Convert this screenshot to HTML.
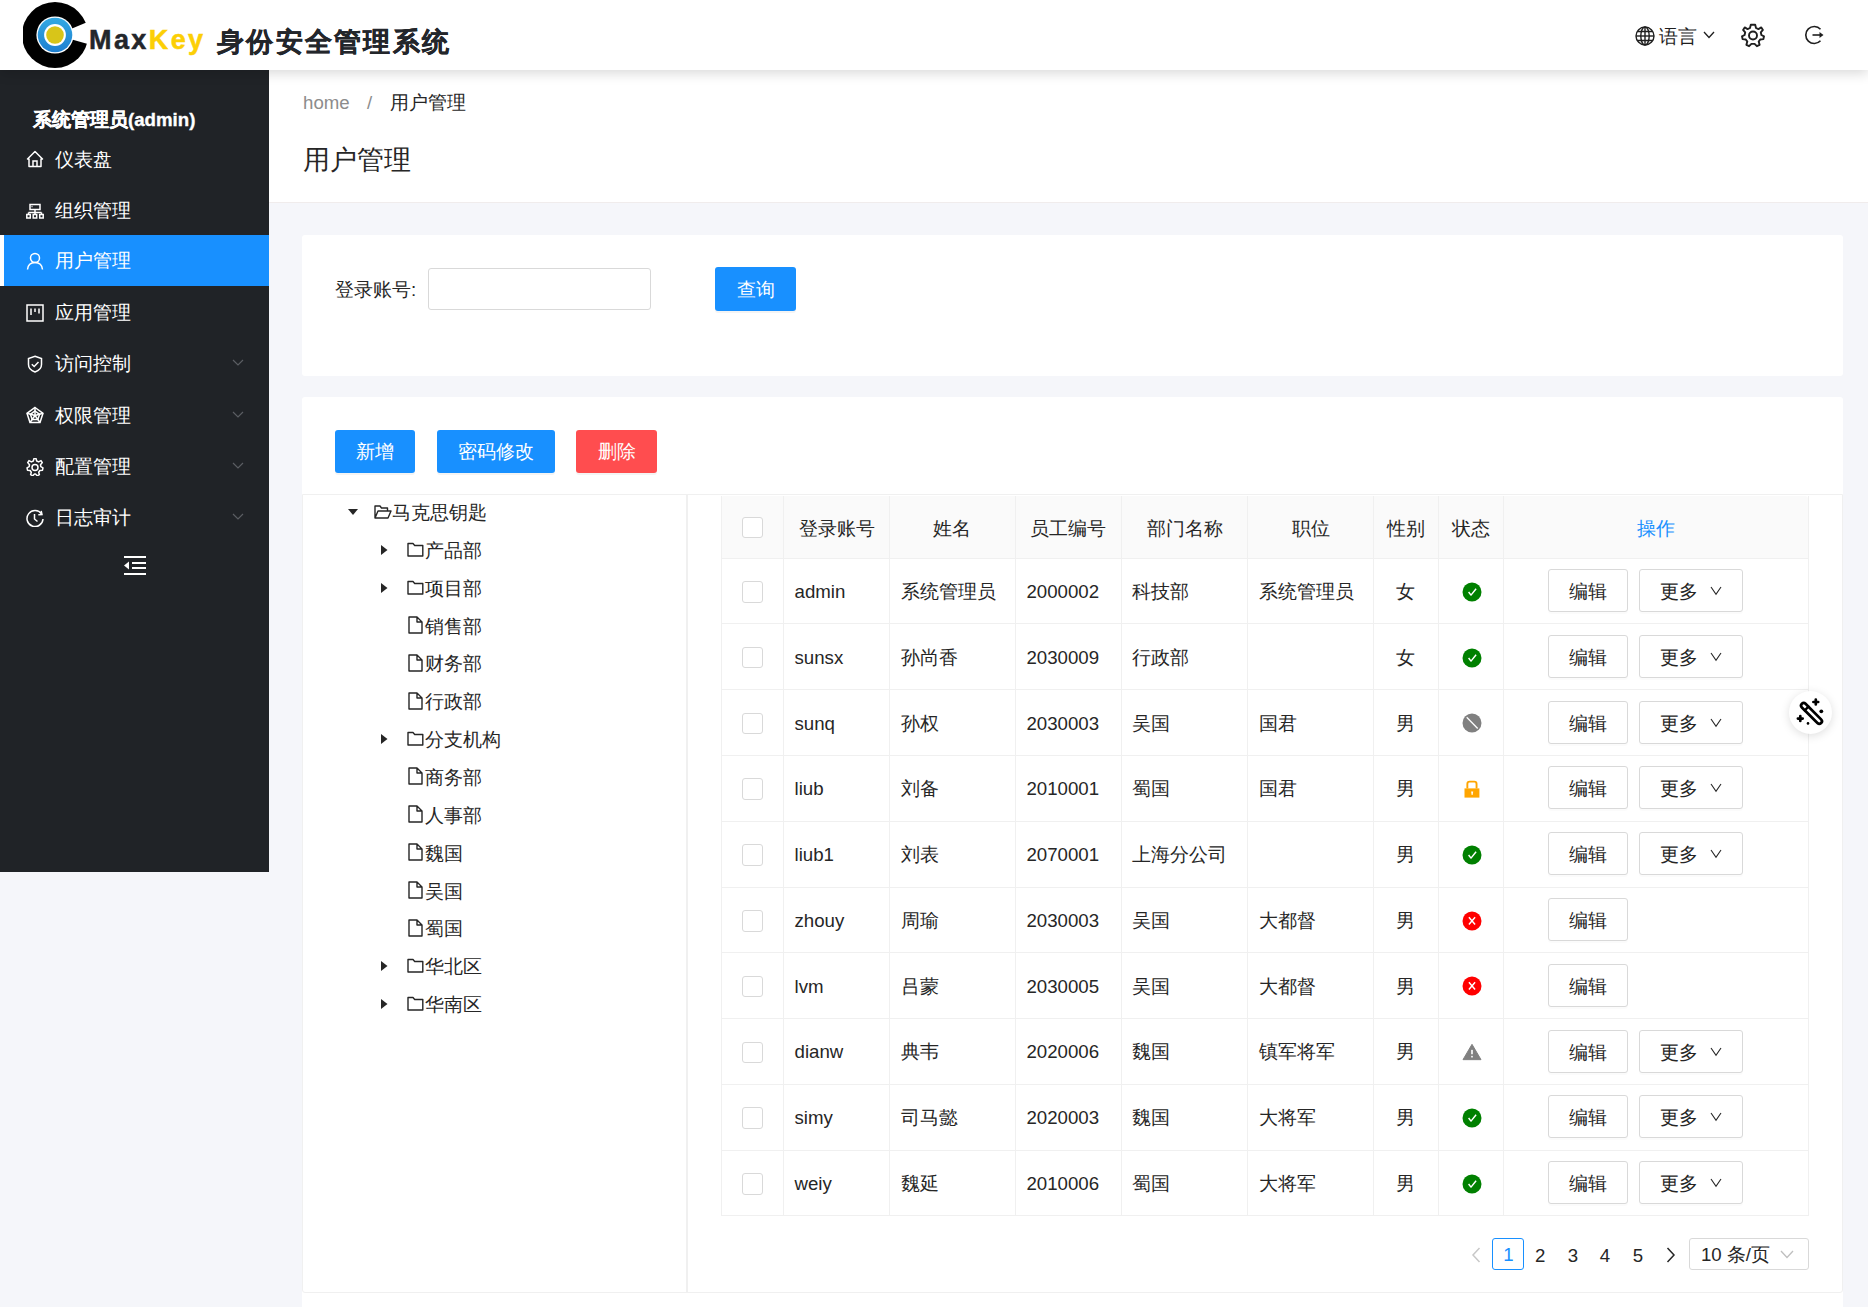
<!DOCTYPE html><html><head><meta charset="utf-8"><title>MaxKey</title><style>
*{box-sizing:border-box;margin:0;padding:0}
html,body{width:1868px;height:1307px;overflow:hidden}
body{position:relative;background:#f5f6fa;font-family:"Liberation Sans",sans-serif;font-size:18.67px;color:#262626}
.abs{position:absolute}
.hdr{left:0;top:0;width:1868px;height:70px;background:#fff;box-shadow:0 3px 12px rgba(0,0,0,.16);z-index:5}
.side{left:0;top:70px;width:269px;height:802px;background:#202327;z-index:4}
.mi{position:absolute;left:0;width:269px;height:51px;color:#fff;font-size:18.67px}
.mi .t{position:absolute;left:55px;top:0;line-height:51px;white-space:nowrap}
.mi svg{position:absolute;left:26px}
.mi .chev{position:absolute;left:232px;top:20px}
.phead{left:269px;top:70px;width:1599px;height:133px;background:#fff;border-bottom:1px solid #f0ecec;z-index:1}
.card{background:#fff;border-radius:3px}
.btn{position:absolute;height:43px;border-radius:3px;color:#fff;text-align:center;line-height:43px;font-size:18.67px;box-shadow:0 2px 0 rgba(0,0,0,.045)}
.blue{background:#1890ff}
.red{background:#ff4d4f}
.tr{position:absolute;height:38px;line-height:38px;white-space:nowrap;font-size:18.67px;color:#262626}
.cell{position:absolute;white-space:nowrap;font-size:18.67px;color:#262626}
.hl{position:absolute;background:#f0f0f0}
.cb{position:absolute;width:21.5px;height:21.5px;border:1px solid #d9d9d9;border-radius:3px;background:#fff}
.obtn{position:absolute;height:43px;border:1px solid #d9d9d9;border-radius:3px;background:#fff;line-height:44px;text-align:center;box-shadow:0 2px 0 rgba(0,0,0,.016)}
</style></head><body>
<div class="abs hdr"><svg width="64" height="66" viewBox="0 0 64 66" style="position:absolute;left:23px;top:2px;">
<defs><linearGradient id="bg1" x1="0" y1="0" x2="0" y2="1"><stop offset="0" stop-color="#33a9e3"/><stop offset="1" stop-color="#1e7fd0"/></linearGradient></defs>
<circle cx="32" cy="33" r="33" fill="#000"/>
<polygon points="40,30.2 70,17.9 70,43.45 40,35.1" fill="#fff"/>
<circle cx="32" cy="33" r="18.6" fill="#fff"/>
<circle cx="32" cy="33" r="17.3" fill="url(#bg1)"/>
<circle cx="32" cy="33" r="10.9" fill="#fff"/>
<circle cx="32" cy="33" r="8.8" fill="#d8c519"/>
</svg><div class="abs" style="left:89px;top:20px;font-size:27px;font-weight:bold;letter-spacing:2.4px;-webkit-text-stroke:0.5px #23262b;line-height:40px;color:#23262b;white-space:nowrap">Max<span style="color:#fccf05;-webkit-text-stroke:0.5px #fccf05">Key</span></div><div class="abs" style="left:217px;top:22px;font-size:27px;font-weight:bold;letter-spacing:2.3px;-webkit-text-stroke:0.3px #23262b;line-height:40px;color:#23262b;white-space:nowrap">身份安全管理系统</div><svg width="20" height="20" viewBox="0 0 20 20" style="position:absolute;left:1635px;top:25.5px;"><g fill="none" stroke="#1f1f1f" stroke-width="1.4"><circle cx="10" cy="10" r="9"/><ellipse cx="10" cy="10" rx="4.2" ry="9"/><line x1="10" y1="1" x2="10" y2="19"/><line x1="1" y1="10" x2="19" y2="10"/><path d="M2.5 5.5 H17.5 M2.5 14.5 H17.5"/></g></svg><div class="abs" style="left:1659px;top:17.5px;line-height:38px;font-size:18.67px;color:#1f1f1f">语言</div><svg width="12" height="8" viewBox="0 0 12 8" style="position:absolute;left:1702.5px;top:31px;"><path d="M1 1 L6 6.5 L11 1" fill="none" stroke="#1f1f1f" stroke-width="1.3"/></svg><svg width="24" height="25" viewBox="0 0 24 25" style="position:absolute;left:1740.5px;top:22.5px;"><g fill="none" stroke="#1f1f1f" stroke-width="1.9"><path d="M12 1.8 L14.2 1.8 L15 5 L17.4 6.1 L20.3 4.4 L21.9 6.9 L19.8 9.4 L20.4 12 L23 13.3 L22.4 16.1 L19.2 16.5 L17.7 18.6 L18.6 21.8 L15.9 23.2 L13.6 20.9 L10.4 20.9 L8.1 23.2 L5.4 21.8 L6.3 18.6 L4.8 16.5 L1.6 16.1 L1 13.3 L3.6 12 L4.2 9.4 L2.1 6.9 L3.7 4.4 L6.6 6.1 L9 5 L9.8 1.8 Z" stroke-linejoin="round"/><circle cx="12" cy="12.5" r="4"/></g></svg><svg width="20" height="20" viewBox="0 0 20 20" style="position:absolute;left:1803.5px;top:25px;"><g fill="none" stroke="#1f1f1f" stroke-width="1.6"><path d="M16.5 4.2 A8.5 8.5 0 1 0 16.5 15.8"/><path d="M8.5 10 H18"/></g><path d="M15.5 7 L19.5 10 L15.5 13 Z" fill="#1f1f1f"/></svg></div>
<div class="abs side"><div class="abs" style="left:33px;top:34.5px;font-size:18.67px;font-weight:bold;color:#fff;line-height:30px;white-space:nowrap;-webkit-text-stroke:0.35px #fff">系统管理员(admin)</div><div class="mi" style="top:63.5px;"><svg width="18" height="18" viewBox="0 0 18 18" style="position:absolute;left:26px;top:16.5px;"><path d="M1.5 9 L9 1.5 L16.5 9 L15 9 L15 16.5 L3 16.5 L3 9 Z" fill="none" stroke="#fff" stroke-width="1.5" stroke-linejoin="round"/><path d="M7 16.5 V11 H11 V16.5" fill="none" stroke="#fff" stroke-width="1.5"/></svg><span class="t">仪表盘</span></div><div class="mi" style="top:114.5px;"><svg width="18" height="18" viewBox="0 0 18 18" style="position:absolute;left:26px;top:18px;"><rect x="4" y="1.5" width="10" height="5" fill="none" stroke="#fff" stroke-width="1.5"/><path d="M9 6.5 V9.5 M2.5 9.5 H15.5 M2.5 9.5 V11 M9 9.5 V11 M15.5 9.5 V11" fill="none" stroke="#fff" stroke-width="1.5"/><rect x="0.8" y="11.5" width="3.5" height="3.5" fill="none" stroke="#fff" stroke-width="1.5"/><rect x="7.2" y="11.5" width="3.5" height="3.5" fill="none" stroke="#fff" stroke-width="1.5"/><rect x="13.7" y="11.5" width="3.5" height="3.5" fill="none" stroke="#fff" stroke-width="1.5"/><path d="M5.5 3.5 H6.5" fill="none" stroke="#fff" stroke-width="1.5"/></svg><span class="t">组织管理</span></div><div class="mi" style="top:165px;background:#1890ff;border-left:0;"><svg width="18" height="18" viewBox="0 0 18 18" style="position:absolute;left:26px;top:16.5px;"><circle cx="9" cy="6" r="4.5" fill="none" stroke="#fff" stroke-width="1.5" stroke-width="1.7"/><path d="M1.5 17.5 C2 12.5 5.5 10.5 9 10.5 C12.5 10.5 16 12.5 16.5 17.5" fill="none" stroke="#fff" stroke-width="1.5" stroke-width="1.7"/></svg><span class="t">用户管理</span><div class="abs" style="left:0;top:0;width:4px;height:51px;background:#fff"></div></div><div class="mi" style="top:217px;"><svg width="18" height="18" viewBox="0 0 18 18" style="position:absolute;left:26px;top:16.5px;"><rect x="1" y="1" width="16" height="16" fill="none" stroke="#fff" stroke-width="1.5" stroke-width="1.7"/><path d="M5 4.5 V11 M9 4.5 V8 M13 4.5 V9.5" fill="none" stroke="#fff" stroke-width="1.5" stroke-width="1.7"/></svg><span class="t">应用管理</span></div><div class="mi" style="top:268px;"><svg width="18" height="18" viewBox="0 0 18 18" style="position:absolute;left:26px;top:16.5px;"><path d="M9 1.3 L15.5 3.6 V9.5 C15.5 13.5 12 16 9 17 C6 16 2.5 13.5 2.5 9.5 V3.6 Z" fill="none" stroke="#fff" stroke-width="1.5" stroke-width="1.5"/><path d="M5.8 9.2 L8.2 11.5 L12.5 7" fill="none" stroke="#fff" stroke-width="1.5" stroke-width="1.5"/></svg><span class="t">访问控制</span><svg width="12" height="8" viewBox="0 0 12 8" style="position:absolute;left:232px;top:21px;"><path d="M1 1 L6 6 L11 1" fill="none" stroke="#5b5e63" stroke-width="1.2"/></svg></div><div class="mi" style="top:319.5px;"><svg width="18" height="18" viewBox="0 0 18 18" style="position:absolute;left:26px;top:16.5px;"><path d="M9 1.5 L17 7.3 L14 16.5 L4 16.5 L1 7.3 Z" fill="none" stroke="#fff" stroke-width="1.5" stroke-width="1.5"/><path d="M9 5 L13.6 8.3 L11.8 13.6 L6.2 13.6 L4.4 8.3 Z" fill="none" stroke="#fff" stroke-width="1.5" stroke-width="1.1"/><path d="M9 1.5 V9.5 M17 7.3 L9 9.5 M14 16.5 L9 9.5 M4 16.5 L9 9.5 M1 7.3 L9 9.5" fill="none" stroke="#fff" stroke-width="1.5" stroke-width="0.9"/></svg><span class="t">权限管理</span><svg width="12" height="8" viewBox="0 0 12 8" style="position:absolute;left:232px;top:21px;"><path d="M1 1 L6 6 L11 1" fill="none" stroke="#5b5e63" stroke-width="1.2"/></svg></div><div class="mi" style="top:371px;"><svg width="18" height="18" viewBox="0 0 18 18" style="position:absolute;left:26px;top:16.5px;"><path d="M8 1 L10 1 L10.7 3.5 L12.6 4.4 L15 3.1 L16.3 5.1 L14.5 7.2 L14.8 9.2 L17 10.4 L16.5 12.7 L13.9 13 L12.7 14.7 L13.4 17.2 L11.3 18.3 L9.5 16.5 L8.5 16.5 L6.7 18.3 L4.6 17.2 L5.3 14.7 L4.1 13 L1.5 12.7 L1 10.4 L3.2 9.2 L3.5 7.2 L1.7 5.1 L3 3.1 L5.4 4.4 L7.3 3.5 Z" fill="none" stroke="#fff" stroke-width="1.5" stroke-width="1.5" stroke-linejoin="round" transform="translate(0,-0.5)"/><circle cx="9" cy="9.5" r="3" fill="none" stroke="#fff" stroke-width="1.5" stroke-width="1.5"/></svg><span class="t">配置管理</span><svg width="12" height="8" viewBox="0 0 12 8" style="position:absolute;left:232px;top:21px;"><path d="M1 1 L6 6 L11 1" fill="none" stroke="#5b5e63" stroke-width="1.2"/></svg></div><div class="mi" style="top:422px;"><svg width="18" height="18" viewBox="0 0 18 18" style="position:absolute;left:26px;top:16.5px;"><path d="M15.6 5 A8 8 0 1 0 17 10" fill="none" stroke="#fff" stroke-width="1.5" stroke-width="1.7"/><path d="M15.2 1.8 L16 5.5 L12.3 5.8" fill="none" stroke="#fff" stroke-width="1.5" stroke-width="1.5"/><path d="M8.5 5 V10 L11.5 12.5" fill="none" stroke="#fff" stroke-width="1.5" stroke-width="1.5"/></svg><span class="t">日志审计</span><svg width="12" height="8" viewBox="0 0 12 8" style="position:absolute;left:232px;top:21px;"><path d="M1 1 L6 6 L11 1" fill="none" stroke="#5b5e63" stroke-width="1.2"/></svg></div><svg width="24" height="20" viewBox="0 0 24 20" style="position:absolute;left:123px;top:484.5px;"><path d="M1 2 H23 M9 8 H23 M9 13 H23 M1 19 H23" stroke="#fff" stroke-width="2.2" fill="none"/><path d="M1 10.5 L6 6.5 V14.5 Z" fill="#fff"/></svg></div>
<div class="abs phead"><div class="abs" style="left:34px;top:18px;line-height:30px;font-size:18.67px;white-space:nowrap"><span style="color:#8c8c8c">home</span><span style="color:#8c8c8c;display:inline-block;width:40px;text-align:center">/</span><span style="color:#262626">用户管理</span></div><div class="abs" style="left:33.5px;top:70px;line-height:40px;font-size:27px;color:#262626;white-space:nowrap">用户管理</div></div>
<div class="abs card" style="left:302px;top:235px;width:1541px;height:141px"><div class="abs" style="left:33px;top:40px;line-height:30px;white-space:nowrap;color:#262626">登录账号:</div><div class="abs" style="left:126px;top:33px;width:223px;height:42px;border:1px solid #d9d9d9;border-radius:3px;background:#fff"></div><div class="btn blue" style="left:413px;top:32px;width:81px;height:44px;line-height:46px">查询</div></div>
<div class="abs card" style="left:302px;top:397px;width:1541px;height:930px"><div class="btn blue" style="left:33px;top:32.5px;width:80px">新增</div><div class="btn blue" style="left:135px;top:32.5px;width:118px">密码修改</div><div class="btn red" style="left:274px;top:32.5px;width:81px">删除</div><div class="abs" style="left:0;top:97px;width:1541px;height:799px;border:1px solid #f0f0f0;border-radius:0 0 3px 3px"></div><div class="abs" style="left:384px;top:97px;width:1.6px;height:799px;background:#f0f0f0"></div><svg width="10" height="7" viewBox="0 0 10 7" style="position:absolute;left:46px;top:111.5px;"><path d="M0 0 H10 L5 6 Z" fill="#262626"/></svg><svg width="18" height="16" viewBox="0 0 18 16" style="position:absolute;left:71.5px;top:107.0px;"><path d="M1 14 V2 H6 L7.5 4 H13.5 V7 M1 14 L4 7 H17 L14 14 Z" fill="none" stroke="#262626" stroke-width="1.4" stroke-linejoin="round"/></svg><div class="tr" style="left:89.5px;top:97.0px">马克思钥匙</div><svg width="7" height="10" viewBox="0 0 7 10" style="position:absolute;left:78.5px;top:147.85000000000002px;"><path d="M0 0 L6.5 5 L0 10 Z" fill="#262626"/></svg><svg width="18" height="17" viewBox="0 0 18 17" style="position:absolute;left:104.5px;top:143.85000000000002px;"><path d="M1 15 V2.5 H6 L7.7 4.5 H15.8 V15 Z" fill="none" stroke="#262626" stroke-width="1.4" stroke-linejoin="round"/></svg><div class="tr" style="left:122.5px;top:134.85000000000002px">产品部</div><svg width="7" height="10" viewBox="0 0 7 10" style="position:absolute;left:78.5px;top:185.70000000000005px;"><path d="M0 0 L6.5 5 L0 10 Z" fill="#262626"/></svg><svg width="18" height="17" viewBox="0 0 18 17" style="position:absolute;left:104.5px;top:181.70000000000005px;"><path d="M1 15 V2.5 H6 L7.7 4.5 H15.8 V15 Z" fill="none" stroke="#262626" stroke-width="1.4" stroke-linejoin="round"/></svg><div class="tr" style="left:122.5px;top:172.70000000000005px">项目部</div><svg width="15" height="18" viewBox="0 0 15 18" style="position:absolute;left:105.5px;top:219.04999999999995px;"><path d="M1 1 H9 L14 6 V17 H1 Z M9 1 V6 H14" fill="none" stroke="#262626" stroke-width="1.4" stroke-linejoin="round"/></svg><div class="tr" style="left:122.5px;top:210.54999999999995px">销售部</div><svg width="15" height="18" viewBox="0 0 15 18" style="position:absolute;left:105.5px;top:256.9px;"><path d="M1 1 H9 L14 6 V17 H1 Z M9 1 V6 H14" fill="none" stroke="#262626" stroke-width="1.4" stroke-linejoin="round"/></svg><div class="tr" style="left:122.5px;top:248.39999999999998px">财务部</div><svg width="15" height="18" viewBox="0 0 15 18" style="position:absolute;left:105.5px;top:294.75px;"><path d="M1 1 H9 L14 6 V17 H1 Z M9 1 V6 H14" fill="none" stroke="#262626" stroke-width="1.4" stroke-linejoin="round"/></svg><div class="tr" style="left:122.5px;top:286.25px">行政部</div><svg width="7" height="10" viewBox="0 0 7 10" style="position:absolute;left:78.5px;top:337.1px;"><path d="M0 0 L6.5 5 L0 10 Z" fill="#262626"/></svg><svg width="18" height="17" viewBox="0 0 18 17" style="position:absolute;left:104.5px;top:333.1px;"><path d="M1 15 V2.5 H6 L7.7 4.5 H15.8 V15 Z" fill="none" stroke="#262626" stroke-width="1.4" stroke-linejoin="round"/></svg><div class="tr" style="left:122.5px;top:324.1px">分支机构</div><svg width="15" height="18" viewBox="0 0 15 18" style="position:absolute;left:105.5px;top:370.45000000000005px;"><path d="M1 1 H9 L14 6 V17 H1 Z M9 1 V6 H14" fill="none" stroke="#262626" stroke-width="1.4" stroke-linejoin="round"/></svg><div class="tr" style="left:122.5px;top:361.95000000000005px">商务部</div><svg width="15" height="18" viewBox="0 0 15 18" style="position:absolute;left:105.5px;top:408.29999999999995px;"><path d="M1 1 H9 L14 6 V17 H1 Z M9 1 V6 H14" fill="none" stroke="#262626" stroke-width="1.4" stroke-linejoin="round"/></svg><div class="tr" style="left:122.5px;top:399.79999999999995px">人事部</div><svg width="15" height="18" viewBox="0 0 15 18" style="position:absolute;left:105.5px;top:446.1500000000001px;"><path d="M1 1 H9 L14 6 V17 H1 Z M9 1 V6 H14" fill="none" stroke="#262626" stroke-width="1.4" stroke-linejoin="round"/></svg><div class="tr" style="left:122.5px;top:437.6500000000001px">魏国</div><svg width="15" height="18" viewBox="0 0 15 18" style="position:absolute;left:105.5px;top:484.0px;"><path d="M1 1 H9 L14 6 V17 H1 Z M9 1 V6 H14" fill="none" stroke="#262626" stroke-width="1.4" stroke-linejoin="round"/></svg><div class="tr" style="left:122.5px;top:475.5px">吴国</div><svg width="15" height="18" viewBox="0 0 15 18" style="position:absolute;left:105.5px;top:521.85px;"><path d="M1 1 H9 L14 6 V17 H1 Z M9 1 V6 H14" fill="none" stroke="#262626" stroke-width="1.4" stroke-linejoin="round"/></svg><div class="tr" style="left:122.5px;top:513.35px">蜀国</div><svg width="7" height="10" viewBox="0 0 7 10" style="position:absolute;left:78.5px;top:564.2px;"><path d="M0 0 L6.5 5 L0 10 Z" fill="#262626"/></svg><svg width="18" height="17" viewBox="0 0 18 17" style="position:absolute;left:104.5px;top:560.2px;"><path d="M1 15 V2.5 H6 L7.7 4.5 H15.8 V15 Z" fill="none" stroke="#262626" stroke-width="1.4" stroke-linejoin="round"/></svg><div class="tr" style="left:122.5px;top:551.2px">华北区</div><svg width="7" height="10" viewBox="0 0 7 10" style="position:absolute;left:78.5px;top:602.05px;"><path d="M0 0 L6.5 5 L0 10 Z" fill="#262626"/></svg><svg width="18" height="17" viewBox="0 0 18 17" style="position:absolute;left:104.5px;top:598.05px;"><path d="M1 15 V2.5 H6 L7.7 4.5 H15.8 V15 Z" fill="none" stroke="#262626" stroke-width="1.4" stroke-linejoin="round"/></svg><div class="tr" style="left:122.5px;top:589.05px">华南区</div></div>
<div class="abs" style="left:721px;top:495.5px;width:1087.4px;height:62.5px;background:#fafafa;border-radius:3px 3px 0 0"></div><div class="hl" style="left:721px;top:495.5px;width:1px;height:720.5px"></div><div class="hl" style="left:783px;top:495.5px;width:1px;height:720.5px"></div><div class="hl" style="left:889px;top:495.5px;width:1px;height:720.5px"></div><div class="hl" style="left:1015px;top:495.5px;width:1px;height:720.5px"></div><div class="hl" style="left:1121px;top:495.5px;width:1px;height:720.5px"></div><div class="hl" style="left:1247px;top:495.5px;width:1px;height:720.5px"></div><div class="hl" style="left:1373px;top:495.5px;width:1px;height:720.5px"></div><div class="hl" style="left:1438px;top:495.5px;width:1px;height:720.5px"></div><div class="hl" style="left:1503px;top:495.5px;width:1px;height:720.5px"></div><div class="hl" style="left:1808px;top:495.5px;width:1px;height:720.5px"></div><div class="hl" style="left:721px;top:558px;width:1088px;height:1px"></div><div class="hl" style="left:721px;top:623px;width:1088px;height:1px"></div><div class="hl" style="left:721px;top:689px;width:1088px;height:1px"></div><div class="hl" style="left:721px;top:755px;width:1088px;height:1px"></div><div class="hl" style="left:721px;top:821px;width:1088px;height:1px"></div><div class="hl" style="left:721px;top:887px;width:1088px;height:1px"></div><div class="hl" style="left:721px;top:952px;width:1088px;height:1px"></div><div class="hl" style="left:721px;top:1018px;width:1088px;height:1px"></div><div class="hl" style="left:721px;top:1084px;width:1088px;height:1px"></div><div class="hl" style="left:721px;top:1150px;width:1088px;height:1px"></div><div class="hl" style="left:721px;top:1215px;width:1088px;height:1px"></div><div class="cb" style="left:741.5px;top:516.8px"></div><div class="cell" style="left:783.5px;top:495.5px;width:106.10000000000002px;height:62.5px;line-height:65.5px;text-align:center;color:#262626">登录账号</div><div class="cell" style="left:889.6px;top:495.5px;width:125.79999999999995px;height:62.5px;line-height:65.5px;text-align:center;color:#262626">姓名</div><div class="cell" style="left:1015.4px;top:495.5px;width:106.00000000000011px;height:62.5px;line-height:65.5px;text-align:center;color:#262626">员工编号</div><div class="cell" style="left:1121.4px;top:495.5px;width:126.29999999999995px;height:62.5px;line-height:65.5px;text-align:center;color:#262626">部门名称</div><div class="cell" style="left:1247.7px;top:495.5px;width:125.70000000000005px;height:62.5px;line-height:65.5px;text-align:center;color:#262626">职位</div><div class="cell" style="left:1373.4px;top:495.5px;width:64.89999999999986px;height:62.5px;line-height:65.5px;text-align:center;color:#262626">性别</div><div class="cell" style="left:1438.3px;top:495.5px;width:64.90000000000009px;height:62.5px;line-height:65.5px;text-align:center;color:#262626">状态</div><div class="cell" style="left:1503.2px;top:495.5px;width:305.20000000000005px;height:62.5px;line-height:65.5px;text-align:center;color:#1890ff">操作</div><div class="cb" style="left:741.5px;top:581.185px"></div><div class="cell" style="left:794.5px;top:557.985px;height:65.8px;line-height:68.8px">admin</div><div class="cell" style="left:900.6px;top:557.985px;height:65.8px;line-height:68.8px">系统管理员</div><div class="cell" style="left:1026.4px;top:557.985px;height:65.8px;line-height:68.8px">2000002</div><div class="cell" style="left:1132.4px;top:557.985px;height:65.8px;line-height:68.8px">科技部</div><div class="cell" style="left:1258.7px;top:557.985px;height:65.8px;line-height:68.8px">系统管理员</div><div class="cell" style="left:1373.4px;top:557.985px;width:64.89999999999986px;height:65.8px;line-height:68.8px;text-align:center">女</div><svg width="20" height="20" viewBox="0 0 20 20" style="position:absolute;left:1461.5px;top:581.785px;"><circle cx="10" cy="10" r="9.5" fill="#008000"/><path d="M6.6 10 L9 13.1 L14.1 6.8" fill="none" stroke="#fff" stroke-width="1.45" stroke-linejoin="round"/></svg><div class="obtn" style="left:1547.5px;top:569.185px;width:80px">编辑</div><div class="obtn" style="left:1638.5px;top:569.185px;width:104px;text-align:left;padding-left:20px">更多<svg width="12" height="10" viewBox="0 0 12 10" style="position:absolute;left:70px;top:16px;"><path d="M1 1 L6 8.3 L11 1" fill="none" stroke="#262626" stroke-width="1.1"/></svg></div><div class="cb" style="left:741.5px;top:646.9549999999999px"></div><div class="cell" style="left:794.5px;top:623.755px;height:65.8px;line-height:68.8px">sunsx</div><div class="cell" style="left:900.6px;top:623.755px;height:65.8px;line-height:68.8px">孙尚香</div><div class="cell" style="left:1026.4px;top:623.755px;height:65.8px;line-height:68.8px">2030009</div><div class="cell" style="left:1132.4px;top:623.755px;height:65.8px;line-height:68.8px">行政部</div><div class="cell" style="left:1258.7px;top:623.755px;height:65.8px;line-height:68.8px"></div><div class="cell" style="left:1373.4px;top:623.755px;width:64.89999999999986px;height:65.8px;line-height:68.8px;text-align:center">女</div><svg width="20" height="20" viewBox="0 0 20 20" style="position:absolute;left:1461.5px;top:647.555px;"><circle cx="10" cy="10" r="9.5" fill="#008000"/><path d="M6.6 10 L9 13.1 L14.1 6.8" fill="none" stroke="#fff" stroke-width="1.45" stroke-linejoin="round"/></svg><div class="obtn" style="left:1547.5px;top:634.9549999999999px;width:80px">编辑</div><div class="obtn" style="left:1638.5px;top:634.9549999999999px;width:104px;text-align:left;padding-left:20px">更多<svg width="12" height="10" viewBox="0 0 12 10" style="position:absolute;left:70px;top:16px;"><path d="M1 1 L6 8.3 L11 1" fill="none" stroke="#262626" stroke-width="1.1"/></svg></div><div class="cb" style="left:741.5px;top:712.7249999999999px"></div><div class="cell" style="left:794.5px;top:689.525px;height:65.8px;line-height:68.8px">sunq</div><div class="cell" style="left:900.6px;top:689.525px;height:65.8px;line-height:68.8px">孙权</div><div class="cell" style="left:1026.4px;top:689.525px;height:65.8px;line-height:68.8px">2030003</div><div class="cell" style="left:1132.4px;top:689.525px;height:65.8px;line-height:68.8px">吴国</div><div class="cell" style="left:1258.7px;top:689.525px;height:65.8px;line-height:68.8px">国君</div><div class="cell" style="left:1373.4px;top:689.525px;width:64.89999999999986px;height:65.8px;line-height:68.8px;text-align:center">男</div><svg width="20" height="20" viewBox="0 0 20 20" style="position:absolute;left:1461.5px;top:713.3249999999999px;"><circle cx="10" cy="10" r="9.5" fill="#808080"/><path d="M4.7 4.3 L15.7 15.5" fill="none" stroke="#fff" stroke-width="1.3"/></svg><div class="obtn" style="left:1547.5px;top:700.7249999999999px;width:80px">编辑</div><div class="obtn" style="left:1638.5px;top:700.7249999999999px;width:104px;text-align:left;padding-left:20px">更多<svg width="12" height="10" viewBox="0 0 12 10" style="position:absolute;left:70px;top:16px;"><path d="M1 1 L6 8.3 L11 1" fill="none" stroke="#262626" stroke-width="1.1"/></svg></div><div class="cb" style="left:741.5px;top:778.4949999999999px"></div><div class="cell" style="left:794.5px;top:755.295px;height:65.8px;line-height:68.8px">liub</div><div class="cell" style="left:900.6px;top:755.295px;height:65.8px;line-height:68.8px">刘备</div><div class="cell" style="left:1026.4px;top:755.295px;height:65.8px;line-height:68.8px">2010001</div><div class="cell" style="left:1132.4px;top:755.295px;height:65.8px;line-height:68.8px">蜀国</div><div class="cell" style="left:1258.7px;top:755.295px;height:65.8px;line-height:68.8px">国君</div><div class="cell" style="left:1373.4px;top:755.295px;width:64.89999999999986px;height:65.8px;line-height:68.8px;text-align:center">男</div><svg width="20" height="20" viewBox="0 0 20 20" style="position:absolute;left:1461.5px;top:779.6949999999999px;"><path d="M5.35 8.6 V3.9 Q5.35 1.65 7.6 1.65 H12.3 Q14.55 1.65 14.55 3.9 V8.6" fill="none" stroke="#ffa500" stroke-width="1.9"/><rect x="2.5" y="8.4" width="14.9" height="9.2" fill="#ffa500"/><polygon points="9.1,11.4 11.2,11.4 10.6,14.9 9.7,14.9" fill="#fff"/></svg><div class="obtn" style="left:1547.5px;top:766.4949999999999px;width:80px">编辑</div><div class="obtn" style="left:1638.5px;top:766.4949999999999px;width:104px;text-align:left;padding-left:20px">更多<svg width="12" height="10" viewBox="0 0 12 10" style="position:absolute;left:70px;top:16px;"><path d="M1 1 L6 8.3 L11 1" fill="none" stroke="#262626" stroke-width="1.1"/></svg></div><div class="cb" style="left:741.5px;top:844.2649999999999px"></div><div class="cell" style="left:794.5px;top:821.0649999999999px;height:65.8px;line-height:68.8px">liub1</div><div class="cell" style="left:900.6px;top:821.0649999999999px;height:65.8px;line-height:68.8px">刘表</div><div class="cell" style="left:1026.4px;top:821.0649999999999px;height:65.8px;line-height:68.8px">2070001</div><div class="cell" style="left:1132.4px;top:821.0649999999999px;height:65.8px;line-height:68.8px">上海分公司</div><div class="cell" style="left:1258.7px;top:821.0649999999999px;height:65.8px;line-height:68.8px"></div><div class="cell" style="left:1373.4px;top:821.0649999999999px;width:64.89999999999986px;height:65.8px;line-height:68.8px;text-align:center">男</div><svg width="20" height="20" viewBox="0 0 20 20" style="position:absolute;left:1461.5px;top:844.8649999999999px;"><circle cx="10" cy="10" r="9.5" fill="#008000"/><path d="M6.6 10 L9 13.1 L14.1 6.8" fill="none" stroke="#fff" stroke-width="1.45" stroke-linejoin="round"/></svg><div class="obtn" style="left:1547.5px;top:832.2649999999999px;width:80px">编辑</div><div class="obtn" style="left:1638.5px;top:832.2649999999999px;width:104px;text-align:left;padding-left:20px">更多<svg width="12" height="10" viewBox="0 0 12 10" style="position:absolute;left:70px;top:16px;"><path d="M1 1 L6 8.3 L11 1" fill="none" stroke="#262626" stroke-width="1.1"/></svg></div><div class="cb" style="left:741.5px;top:910.0349999999999px"></div><div class="cell" style="left:794.5px;top:886.8349999999999px;height:65.8px;line-height:68.8px">zhouy</div><div class="cell" style="left:900.6px;top:886.8349999999999px;height:65.8px;line-height:68.8px">周瑜</div><div class="cell" style="left:1026.4px;top:886.8349999999999px;height:65.8px;line-height:68.8px">2030003</div><div class="cell" style="left:1132.4px;top:886.8349999999999px;height:65.8px;line-height:68.8px">吴国</div><div class="cell" style="left:1258.7px;top:886.8349999999999px;height:65.8px;line-height:68.8px">大都督</div><div class="cell" style="left:1373.4px;top:886.8349999999999px;width:64.89999999999986px;height:65.8px;line-height:68.8px;text-align:center">男</div><svg width="20" height="20" viewBox="0 0 20 20" style="position:absolute;left:1461.5px;top:910.6349999999999px;"><circle cx="10" cy="10" r="9.5" fill="#ff0000"/><path d="M6.9 6.3 L13.1 13.5 M13.1 6.3 L6.9 13.5" fill="none" stroke="#fff" stroke-width="1.45"/></svg><div class="obtn" style="left:1547.5px;top:898.0349999999999px;width:80px">编辑</div><div class="cb" style="left:741.5px;top:975.805px"></div><div class="cell" style="left:794.5px;top:952.605px;height:65.8px;line-height:68.8px">lvm</div><div class="cell" style="left:900.6px;top:952.605px;height:65.8px;line-height:68.8px">吕蒙</div><div class="cell" style="left:1026.4px;top:952.605px;height:65.8px;line-height:68.8px">2030005</div><div class="cell" style="left:1132.4px;top:952.605px;height:65.8px;line-height:68.8px">吴国</div><div class="cell" style="left:1258.7px;top:952.605px;height:65.8px;line-height:68.8px">大都督</div><div class="cell" style="left:1373.4px;top:952.605px;width:64.89999999999986px;height:65.8px;line-height:68.8px;text-align:center">男</div><svg width="20" height="20" viewBox="0 0 20 20" style="position:absolute;left:1461.5px;top:976.405px;"><circle cx="10" cy="10" r="9.5" fill="#ff0000"/><path d="M6.9 6.3 L13.1 13.5 M13.1 6.3 L6.9 13.5" fill="none" stroke="#fff" stroke-width="1.45"/></svg><div class="obtn" style="left:1547.5px;top:963.805px;width:80px">编辑</div><div class="cb" style="left:741.5px;top:1041.575px"></div><div class="cell" style="left:794.5px;top:1018.3750000000001px;height:65.8px;line-height:68.8px">dianw</div><div class="cell" style="left:900.6px;top:1018.3750000000001px;height:65.8px;line-height:68.8px">典韦</div><div class="cell" style="left:1026.4px;top:1018.3750000000001px;height:65.8px;line-height:68.8px">2020006</div><div class="cell" style="left:1132.4px;top:1018.3750000000001px;height:65.8px;line-height:68.8px">魏国</div><div class="cell" style="left:1258.7px;top:1018.3750000000001px;height:65.8px;line-height:68.8px">镇军将军</div><div class="cell" style="left:1373.4px;top:1018.3750000000001px;width:64.89999999999986px;height:65.8px;line-height:68.8px;text-align:center">男</div><svg width="20" height="20" viewBox="0 0 20 20" style="position:absolute;left:1461.5px;top:1042.1750000000002px;"><polygon points="10,2.35 19,17.65 1,17.65" fill="#808080" stroke="#808080" stroke-width="1" stroke-linejoin="round"/><rect x="9.2" y="7.85" width="1.6" height="4.4" fill="#fff"/><rect x="9.2" y="13.85" width="1.6" height="1.6" fill="#fff"/></svg><div class="obtn" style="left:1547.5px;top:1029.575px;width:80px">编辑</div><div class="obtn" style="left:1638.5px;top:1029.575px;width:104px;text-align:left;padding-left:20px">更多<svg width="12" height="10" viewBox="0 0 12 10" style="position:absolute;left:70px;top:16px;"><path d="M1 1 L6 8.3 L11 1" fill="none" stroke="#262626" stroke-width="1.1"/></svg></div><div class="cb" style="left:741.5px;top:1107.345px"></div><div class="cell" style="left:794.5px;top:1084.145px;height:65.8px;line-height:68.8px">simy</div><div class="cell" style="left:900.6px;top:1084.145px;height:65.8px;line-height:68.8px">司马懿</div><div class="cell" style="left:1026.4px;top:1084.145px;height:65.8px;line-height:68.8px">2020003</div><div class="cell" style="left:1132.4px;top:1084.145px;height:65.8px;line-height:68.8px">魏国</div><div class="cell" style="left:1258.7px;top:1084.145px;height:65.8px;line-height:68.8px">大将军</div><div class="cell" style="left:1373.4px;top:1084.145px;width:64.89999999999986px;height:65.8px;line-height:68.8px;text-align:center">男</div><svg width="20" height="20" viewBox="0 0 20 20" style="position:absolute;left:1461.5px;top:1107.9450000000002px;"><circle cx="10" cy="10" r="9.5" fill="#008000"/><path d="M6.6 10 L9 13.1 L14.1 6.8" fill="none" stroke="#fff" stroke-width="1.45" stroke-linejoin="round"/></svg><div class="obtn" style="left:1547.5px;top:1095.345px;width:80px">编辑</div><div class="obtn" style="left:1638.5px;top:1095.345px;width:104px;text-align:left;padding-left:20px">更多<svg width="12" height="10" viewBox="0 0 12 10" style="position:absolute;left:70px;top:16px;"><path d="M1 1 L6 8.3 L11 1" fill="none" stroke="#262626" stroke-width="1.1"/></svg></div><div class="cb" style="left:741.5px;top:1173.115px"></div><div class="cell" style="left:794.5px;top:1149.915px;height:65.8px;line-height:68.8px">weiy</div><div class="cell" style="left:900.6px;top:1149.915px;height:65.8px;line-height:68.8px">魏延</div><div class="cell" style="left:1026.4px;top:1149.915px;height:65.8px;line-height:68.8px">2010006</div><div class="cell" style="left:1132.4px;top:1149.915px;height:65.8px;line-height:68.8px">蜀国</div><div class="cell" style="left:1258.7px;top:1149.915px;height:65.8px;line-height:68.8px">大将军</div><div class="cell" style="left:1373.4px;top:1149.915px;width:64.89999999999986px;height:65.8px;line-height:68.8px;text-align:center">男</div><svg width="20" height="20" viewBox="0 0 20 20" style="position:absolute;left:1461.5px;top:1173.7150000000001px;"><circle cx="10" cy="10" r="9.5" fill="#008000"/><path d="M6.6 10 L9 13.1 L14.1 6.8" fill="none" stroke="#fff" stroke-width="1.45" stroke-linejoin="round"/></svg><div class="obtn" style="left:1547.5px;top:1161.115px;width:80px">编辑</div><div class="obtn" style="left:1638.5px;top:1161.115px;width:104px;text-align:left;padding-left:20px">更多<svg width="12" height="10" viewBox="0 0 12 10" style="position:absolute;left:70px;top:16px;"><path d="M1 1 L6 8.3 L11 1" fill="none" stroke="#262626" stroke-width="1.1"/></svg></div>
<svg width="10" height="16" viewBox="0 0 10 16" style="position:absolute;left:1471px;top:1247px;"><path d="M8.5 1 L2 8 L8.5 15" fill="none" stroke="#c8c8c8" stroke-width="1.5"/></svg><div class="abs" style="left:1492.2px;top:1238.2px;width:32.3px;height:31.6px;border:1.3px solid #1890ff;border-radius:3px;color:#1890ff;text-align:center;line-height:32px">1</div><div class="abs" style="left:1524.3px;top:1238px;width:32px;height:32px;text-align:center;line-height:35px;color:#262626">2</div><div class="abs" style="left:1556.9px;top:1238px;width:32px;height:32px;text-align:center;line-height:35px;color:#262626">3</div><div class="abs" style="left:1589px;top:1238px;width:32px;height:32px;text-align:center;line-height:35px;color:#262626">4</div><div class="abs" style="left:1622px;top:1238px;width:32px;height:32px;text-align:center;line-height:35px;color:#262626">5</div><svg width="10" height="16" viewBox="0 0 10 16" style="position:absolute;left:1666px;top:1247px;"><path d="M1.5 1 L8 8 L1.5 15" fill="none" stroke="#262626" stroke-width="1.5"/></svg><div class="abs" style="left:1689.4px;top:1238.2px;width:119.6px;height:31.6px;border:1px solid #d9d9d9;border-radius:3px;line-height:31px;padding-left:10.5px;white-space:nowrap;color:#262626">10 条/页</div><svg width="14" height="9" viewBox="0 0 14 9" style="position:absolute;left:1779.5px;top:1250px;"><path d="M1 1 L7 7.5 L13 1" fill="none" stroke="#bfbfbf" stroke-width="1.3"/></svg>
<div class="abs" style="left:1788.9px;top:690.7px;width:43.4px;height:43.4px;border-radius:50%;background:#fff;box-shadow:0 2px 10px rgba(0,0,0,.13);z-index:6"></div><svg width="44" height="44" viewBox="0 0 44 44" style="position:absolute;left:1788px;top:690px;z-index:7"><g fill="none" stroke="#000" stroke-width="2.7" stroke-linecap="round"><g transform="translate(23.5,23.4) rotate(45)"><rect x="-13.6" y="-2.6" width="27.2" height="5.2" rx="2.6"/><path d="M-6.9 -2.6 V2.6" stroke-width="2.4"/></g><path d="M27.8 9.6 V14.4 M25.4 12 H30.2 M12.3 26.2 V31 M9.9 28.6 H14.7"/></g><circle cx="33.3" cy="21.3" r="1.9" fill="#000"/><circle cx="20" cy="33.4" r="1.3" fill="#000"/></svg>
</body></html>
